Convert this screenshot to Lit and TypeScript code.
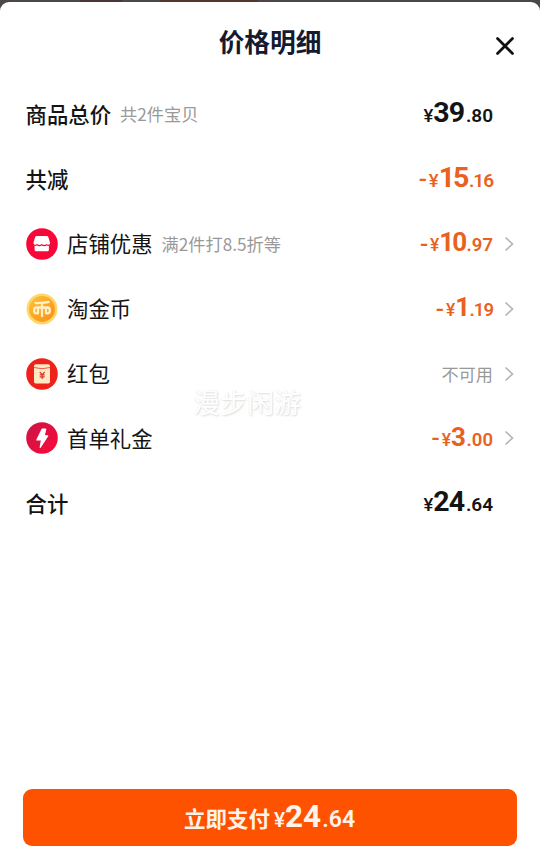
import { LitElement, html, css, svg, nothing } from "lit";
import { customElement, property } from "lit/decorators.js";

type IconName = "shop" | "coin" | "packet" | "bolt";

interface Row {
  label: string;
  note?: string;
  icon?: IconName;
  price?: [string, string, string];
  text?: string;
  accent?: boolean;
  arrow?: boolean;
}

const rows: Row[] = [
  { label: "商品总价", note: "共2件宝贝", price: ["", "39", ".80"] },
  { label: "共减", price: ["-", "15", ".16"], accent: true },
  { label: "店铺优惠", note: "满2件打8.5折等", icon: "shop", price: ["-", "10", ".97"], accent: true, arrow: true },
  { label: "淘金币", icon: "coin", price: ["-", "1", ".19"], accent: true, arrow: true },
  { label: "红包", icon: "packet", text: "不可用", arrow: true },
  { label: "首单礼金", icon: "bolt", price: ["-", "3", ".00"], accent: true, arrow: true },
  { label: "合计", price: ["", "24", ".64"] },
];

const icons = {
  shop: svg`
    <circle cx="16" cy="16" r="15.800" fill="#f80838"/>
    <path d="M10.800 8h9.900q1.300 0 1.700 1.200l1.600 5.300q.4 2.400-1.100 3.300v4q0 1.500-1.500 1.500H10.100q-1.500 0-1.500-1.500v-4q-1.500-.9-1.100-3.300l1.600-5.300Q9.500 8 10.800 8z" fill="#fff"/>
    <path d="M7 16.200q1.800 2 4 .5 2.400 1.900 4.800 0 2.400 1.900 4.800 0 2.200 1.500 4-.5" fill="none" stroke="#f80838" stroke-width="1.200"/>`,
  coin: svg`
    <defs><linearGradient id="g" x2="1" y2="1"><stop stop-color="#ffc03a"/><stop offset="1" stop-color="#f98e14"/></linearGradient></defs>
    <circle cx="16" cy="16" r="15.400" fill="#ffd768"/>
    <circle cx="16" cy="16" r="12.900" fill="url(#g)"/>
    <g fill="none" stroke="#fff0c4" stroke-width="2.300" stroke-linecap="round" stroke-linejoin="round">
      <path d="M9.500 10q7 .2 13-1M16 10v13.200M11.800 20.300h-1.300q-2.400 0-2.400-2.900t2.400-2.900h11q2.400 0 2.400 2.900t-2.400 2.900h-1.300M12 14.800v5.500M20 14.800v5.500"/>
    </g>`,
  packet: svg`
    <circle cx="16" cy="16" r="15.800" fill="#ef211b"/>
    <rect x="8" y="6.200" width="16" height="19.300" rx="1.800" fill="#ffe9c4"/>
    <path d="M7.800 9.500q8.200 2.400 16.400 0" fill="none" stroke="#e9493a" stroke-width=".9"/>
    <path d="M13.700 13.800L16.200 16.700l2.500-2.900M16.200 16.700v4.200M13.700 16.900h5M13.700 18.900h5" fill="none" stroke="#d6352c" stroke-width="1.100"/>`,
  bolt: svg`
    <defs><linearGradient id="g" x2="1" y2="1"><stop stop-color="#c91645"/><stop offset="1" stop-color="#fa0a3c"/></linearGradient></defs>
    <circle cx="16" cy="16" r="15.800" fill="url(#g)"/>
    <path d="M16.200 7h3.500l-1.500 6.800h3.500L14.200 25.300l1.300-7.300h-4.700z" fill="#fff" stroke="#fff" stroke-width="1.200" stroke-linejoin="round"/>`,
};

@customElement("row-icon")
class RowIcon extends LitElement {
  @property() name: IconName = "shop";
  static styles = css`
    :host, svg { display: block; width: 32px; height: 32px; }
  `;
  render() {
    return html`<svg viewBox="0 0 32 32">${icons[this.name]}</svg>`;
  }
}

@customElement("price-text")
class PriceText extends LitElement {
  @property({ attribute: false }) parts: [string, string, string] = ["", "", ""];
  static styles = css`
    :host { display: flex; align-items: baseline; font-family: Roboto, "Noto Sans", sans-serif; font-weight: 700; line-height: 34px; white-space: nowrap; }
    .minus { width: 8px; height: 2px; margin-right: 2px; align-self: center; display: flex; align-items: center; justify-content: center; font-size: 24px; font-weight: 500; }
    .yen { font-size: var(--yen, 18.5px); font-weight: 500; }
    .whole { font-size: var(--whole, 28.5px); letter-spacing: var(--track, -0.8px); }
    .cents { font-size: var(--cents, 19px); font-weight: 600; letter-spacing: 0; margin-left: 1.5px; }
    .whole.narrow { letter-spacing: -2px; }
    .cents.narrow { letter-spacing: -1px; }
  `;
  render() {
    const [sign, whole, cents] = this.parts;
    const narrow = (s: string) => (s.includes("1") ? "narrow" : "");
    return html`${sign ? html`<span class="minus">${sign}</span>` : nothing}<span class="yen">¥</span><span class="whole ${narrow(whole)}">${whole}</span><span class="cents ${narrow(cents)}">${cents}</span>`;
  }
}

@customElement("app-root")
class AppRoot extends LitElement {
  static styles = css`
    :host { display: block; height: 868px; padding-top: 2px; box-sizing: border-box; overflow: hidden; background: linear-gradient(90deg, #4b4747 0 80px, #493536 80px 122px, #4b4747 122px 160px, #55352c 160px 258px, #4b4747 258px); font-family: "Noto Sans CJK SC", sans-serif; color: #141414; }
    .sheet { position: relative; display: flex; flex-direction: column; height: 866px; background: #fff; border-radius: 9px 9px 0 0; }
    header { display: grid; grid-template-columns: 1fr auto 1fr; align-items: center; height: 80px; padding: 0 25px; }
    h1 { grid-column: 2; margin: 0 0 2px; font-size: 25.7px; font-weight: 700; line-height: 36px; color: #141b31; }
    .close { justify-self: end; width: 20px; height: 20px; margin-top: 8px; }
    .list { display: flex; flex-direction: column; }
    .row { display: flex; align-items: center; height: 64.8px; padding: 0 25px 0 26px; }
    .label { margin-bottom: 1px; font-size: 21.4px; line-height: 32px; }
    .strong { margin-left: -0.5px; font-weight: 500; }
    row-icon { margin-right: 9px; }
    .note { margin-left: 9px; margin-bottom: 1px; font-size: 17.2px; color: #999; }
    .value { display: flex; align-items: center; margin-left: auto; }
    .accent { color: #e9611e; }
    .linked { --whole: 26px; --cents: 18.5px; --yen: 17.5px; }
    .muted { margin-bottom: 1px; font-size: 17.2px; color: #999; }
    .arrow { width: 10px; height: 16px; margin: 0 1px 0 11px; }
    .gap { width: 22px; }
    .mark { position: absolute; left: 193px; top: 380px; font-size: 27px; line-height: 40px; color: #fff; text-shadow: 1px 1px 2px #ddd, 0 0 1px #e8e8e8; }
    .pay { display: flex; align-items: center; justify-content: center; gap: 4px; height: 57px; margin: auto 23.5px 22px 22.5px; padding: 0; border: 0; border-radius: 9px; background: #ff5200; color: #fff4ea; font-family: inherit; --whole: 31.5px; --cents: 23px; --yen: 21px; --track: -0.2px; }
    .pay-label { font-size: 21.5px; font-weight: 700; line-height: 32px; }
    .pay price-text { margin-top: 2px; }
  `;

  row(r: Row) {
    return html`<div class="row">
      ${r.icon ? html`<row-icon name=${r.icon}></row-icon>` : nothing}
      <span class="label ${r.icon ? "" : "strong"}">${r.label}</span>
      ${r.note ? html`<span class="note">${r.note}</span>` : nothing}
      <div class="value ${r.accent ? "accent" : ""} ${r.arrow ? "linked" : ""}">
        ${r.price ? html`<price-text .parts=${r.price}></price-text>` : html`<span class="muted">${r.text}</span>`}
        ${r.arrow
          ? html`<svg class="arrow" viewBox="0 0 10 16"><path d="M1.500 1.500L8.500 8l-7 6.500" fill="none" stroke="#b5b5b5" stroke-width="1.700"/></svg>`
          : html`<span class="gap"></span>`}
      </div>
    </div>`;
  }

  render() {
    return html`<div class="sheet">
      <header>
        <h1>价格明细</h1>
        <svg class="close" viewBox="0 0 20 20"><path d="M2.500 2.500l15 15M17.500 2.500l-15 15" fill="none" stroke="#111" stroke-width="2.700" stroke-linecap="round"/></svg>
      </header>
      <div class="list">${rows.map((r) => this.row(r))}</div>
      <div class="mark">漫步闲游</div>
      <button class="pay"><span class="pay-label">立即支付</span><price-text .parts=${["", "24", ".64"]}></price-text></button>
    </div>`;
  }
}
